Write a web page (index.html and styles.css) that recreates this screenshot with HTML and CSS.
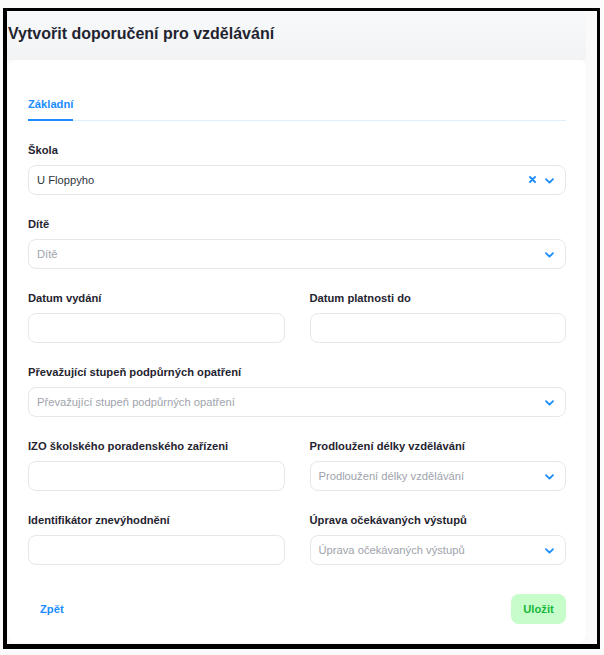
FILE: index.html
```html
<!DOCTYPE html>
<html lang="cs">
<head>
<meta charset="utf-8">
<title>Vytvořit doporučení pro vzdělávání</title>
<link rel="stylesheet" href="styles.css">
</head>
<body>
<div class="frame">
  <header class="page-header">
    <h1 class="title">Vytvořit doporučení pro vzdělávání</h1>
  </header>
  <main class="card">
    <nav class="tabs">
      <span class="tab active">Základní</span>
    </nav>
    <form class="fields">
      <div class="field">
        <label class="label">Škola</label>
        <div class="control select">
          <span class="value">U Floppyho</span>
          <span class="icons">
            <svg class="ico-x" width="7" height="7" viewBox="0 0 7 7"><path d="M1 1L6 6M6 1L1 6" stroke="#1a8cff" stroke-width="1.8" stroke-linecap="round" fill="none"/></svg>
            <svg class="ico-chev" width="9" height="6" viewBox="0 0 9 6"><path d="M1 1.2L4.5 4.6L8 1.2" stroke="#1a8cff" stroke-width="1.8" stroke-linecap="round" stroke-linejoin="round" fill="none"/></svg>
          </span>
        </div>
      </div>
      <div class="field">
        <label class="label">Dítě</label>
        <div class="control select">
          <span class="placeholder">Dítě</span>
          <span class="icons">
            <svg class="ico-chev" width="9" height="6" viewBox="0 0 9 6"><path d="M1 1.2L4.5 4.6L8 1.2" stroke="#1a8cff" stroke-width="1.8" stroke-linecap="round" stroke-linejoin="round" fill="none"/></svg>
          </span>
        </div>
      </div>
      <div class="row">
        <div class="field">
          <label class="label">Datum vydání</label>
          <input class="control" type="text">
        </div>
        <div class="field">
          <label class="label">Datum platnosti do</label>
          <input class="control" type="text">
        </div>
      </div>
      <div class="field">
        <label class="label">Převažující stupeň podpůrných opatření</label>
        <div class="control select">
          <span class="placeholder">Převažující stupeň podpůrných opatření</span>
          <span class="icons">
            <svg class="ico-chev" width="9" height="6" viewBox="0 0 9 6"><path d="M1 1.2L4.5 4.6L8 1.2" stroke="#1a8cff" stroke-width="1.8" stroke-linecap="round" stroke-linejoin="round" fill="none"/></svg>
          </span>
        </div>
      </div>
      <div class="row">
        <div class="field">
          <label class="label">IZO školského poradenského zařízeni</label>
          <input class="control" type="text">
        </div>
        <div class="field">
          <label class="label">Prodloužení délky vzdělávání</label>
          <div class="control select">
            <span class="placeholder">Prodloužení délky vzdělávání</span>
            <span class="icons">
              <svg class="ico-chev" width="9" height="6" viewBox="0 0 9 6"><path d="M1 1.2L4.5 4.6L8 1.2" stroke="#1a8cff" stroke-width="1.8" stroke-linecap="round" stroke-linejoin="round" fill="none"/></svg>
            </span>
          </div>
        </div>
      </div>
      <div class="row">
        <div class="field">
          <label class="label">Identifikátor znevýhodnění</label>
          <input class="control" type="text">
        </div>
        <div class="field">
          <label class="label">Úprava očekávaných výstupů</label>
          <div class="control select">
            <span class="placeholder">Úprava očekávaných výstupů</span>
            <span class="icons">
              <svg class="ico-chev" width="9" height="6" viewBox="0 0 9 6"><path d="M1 1.2L4.5 4.6L8 1.2" stroke="#1a8cff" stroke-width="1.8" stroke-linecap="round" stroke-linejoin="round" fill="none"/></svg>
            </span>
          </div>
        </div>
      </div>
    </form>
    <footer class="actions">
      <button class="btn btn-text" type="button">Zpět</button>
      <button class="btn btn-save" type="button">Uložit</button>
    </footer>
  </main>
</div>
</body>
</html>
```
FILE: styles.css
```css
* { box-sizing: border-box; }

html, body {
  margin: 0;
  padding: 0;
  background: #fbfbfb;
  font-family: "Liberation Sans", Arial, sans-serif;
}

body {
  padding: 8px 0 0 3px;
}

.frame {
  width: 597px;
  height: 641px;
  border-style: solid;
  border-color: #000;
  border-width: 3px 3px 5px 4px;
  background: #fafafa;
  padding: 0 11px 2px 1px;
  display: flex;
  flex-direction: column;
}

.page-header {
  height: 49px;
  padding: 13px 0 0 0;
  background: linear-gradient(to bottom, #f8f9fa 0%, #f2f3f5 100%);
  margin-left: -1px;
  padding-left: 1px;
}

.title {
  margin: 0;
  font-size: 16px;
  line-height: 20px;
  font-weight: 700;
  color: #1f2430;
}

.card {
  flex: 1;
  background: #fff;
  border-radius: 8px;
  padding: 36px 20px 18px;
  display: flex;
  flex-direction: column;
}

.tabs {
  display: flex;
  border-bottom: 1px solid #ddeefc;
}

.tab {
  font-size: 11.2px;
  font-weight: 700;
  line-height: 16px;
  padding-bottom: 7px;
  color: #1a8cff;
  border-bottom: 2px solid #1a8cff;
  margin-bottom: -1px;
}

.fields {
  margin: 21px 0 0;
  display: flex;
  flex-direction: column;
  gap: 21px;
}

.row {
  display: grid;
  grid-template-columns: 1fr 1fr;
  gap: 25px;
}

.field {
  display: flex;
  flex-direction: column;
  gap: 7px;
}

.label {
  font-size: 11.2px;
  line-height: 16px;
  font-weight: 700;
  color: #1f2430;
}

.control {
  height: 30px;
  width: 100%;
  border: 1px solid #e6e7ea;
  border-radius: 8px;
  background: #fff;
  padding: 0 11px 0 8px;
  font-family: "Liberation Sans", Arial, sans-serif;
  font-size: 11.2px;
  color: #374151;
  outline: none;
  margin: 0;
}

.select {
  display: flex;
  align-items: center;
  justify-content: space-between;
}

.value { color: #2f3640; }

.placeholder { color: #9ea3ab; }

.icons {
  display: flex;
  align-items: center;
  gap: 9px;
}

.ico-x { display: block; margin-top: -2px; }
.ico-chev { display: block; margin-top: 2px; }

.actions {
  margin-top: 29px;
  display: flex;
  justify-content: space-between;
  align-items: center;
}

.btn {
  height: 30px;
  border: none;
  border-radius: 8px;
  padding: 0 12px;
  font-family: "Liberation Sans", Arial, sans-serif;
  font-size: 11.2px;
  font-weight: 700;
  background: transparent;
  cursor: pointer;
}

.btn-text { color: #1a8cff; }

.btn-save {
  width: 55px;
  padding: 0;
  background: #c6fdca;
  color: #18b63a;
}
```
